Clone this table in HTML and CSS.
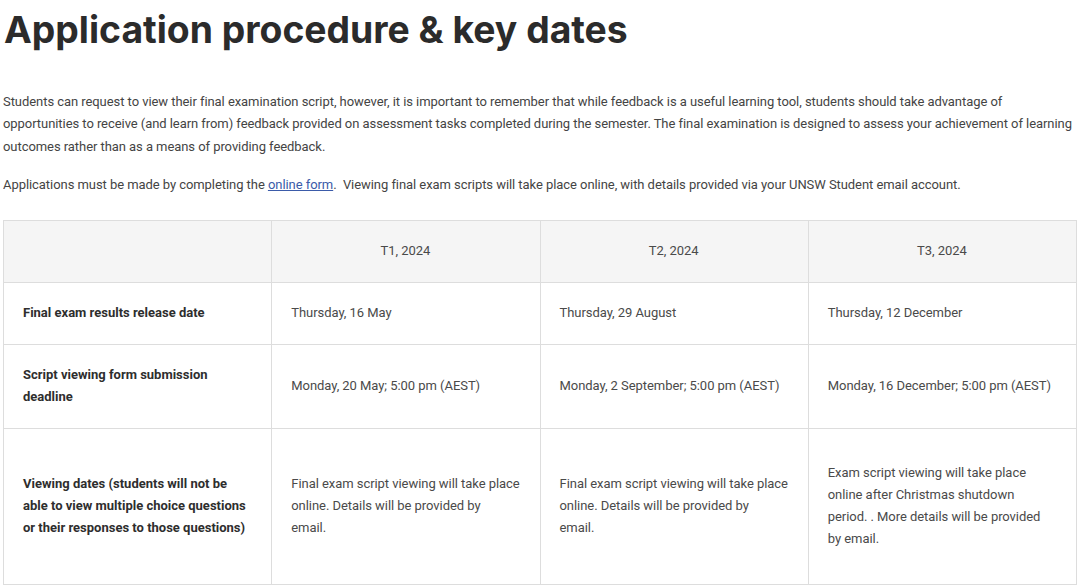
FILE: index.html
```html
<!DOCTYPE html>
<html lang="en">
<head>
<meta charset="utf-8">
<link rel="stylesheet" href="styles.css">
</head>
<body>
<h1 class="title">Application procedure &amp; key dates</h1>
<p class="text">Students can request to view their final examination script, however, it is important to remember that while feedback is a useful learning tool, students should take advantage of opportunities to receive (and learn from) feedback provided on assessment tasks completed during the semester. The final examination is designed to assess your achievement of learning outcomes rather than as a means of providing feedback.</p>
<p class="text second">Applications must be made by completing the <a class="link" href="#">online form</a>.&nbsp; Viewing final exam scripts will take place online, with details provided via your UNSW Student email account.</p>
<table class="dates">
  <thead>
    <tr>
      <th></th>
      <th>T1, 2024</th>
      <th>T2, 2024</th>
      <th>T3, 2024</th>
    </tr>
  </thead>
  <tbody>
    <tr>
      <td class="label">Final exam results release date</td>
      <td>Thursday, 16 May</td>
      <td>Thursday, 29 August</td>
      <td>Thursday, 12 December</td>
    </tr>
    <tr>
      <td class="label">Script viewing form submission deadline</td>
      <td>Monday, 20 May; 5:00 pm (AEST)</td>
      <td>Monday, 2 September; 5:00 pm (AEST)</td>
      <td>Monday, 16 December; 5:00 pm (AEST)</td>
    </tr>
    <tr class="tall">
      <td class="label">Viewing dates (students will not be able to view multiple choice questions or their responses to those questions)</td>
      <td>Final exam script viewing will take place online. Details will be provided by<br>email.</td>
      <td>Final exam script viewing will take place online. Details will be provided by<br>email.</td>
      <td>Exam script viewing will take place<br>online after Christmas shutdown<br>period. . More details will be provided<br>by email.</td>
    </tr>
  </tbody>
</table>
</body>
</html>
```
FILE: styles.css
```css
html, body {
  background: #ffffff;
}
body {
  margin: 0 3px;
  font-family: Roboto, "Liberation Sans", sans-serif;
  color: #444444;
}
.title {
  margin: 7px 0 0 1px;
  font-family: Inter, "Open Sans", sans-serif;
  font-weight: 700;
  font-size: 37.3px;
  line-height: 46px;
  color: #2b2b2b;
}
.text {
  margin: 38px 0 0 0;
  font-size: 13px;
  line-height: 22.3px;
  letter-spacing: -0.06px;
}
.text.second {
  margin-top: 16px;
}
.link {
  color: #3b5ba9;
  text-decoration: underline;
}
.dates {
  margin-top: 24px;
  width: 1074px;
  border-collapse: collapse;
  table-layout: fixed;
  font-size: 13px;
  line-height: 22px;
  letter-spacing: -0.05px;
}
.dates th,
.dates td {
  border: 1px solid #dddddd;
  padding: 19px 15px 20px 19px;
  vertical-align: middle;
  text-align: left;
  color: #4a4a4a;
}
.dates th {
  background: #f5f5f5;
  font-weight: 400;
  text-align: center;
  padding-right: 20px;
}
.dates td.label {
  font-weight: 700;
  color: #2e2e2e;
  font-size: 13px;
  letter-spacing: 0;
  padding-right: 20px;
}
.dates tr.tall td {
  padding-top: 33px;
  padding-bottom: 34px;
}
```
